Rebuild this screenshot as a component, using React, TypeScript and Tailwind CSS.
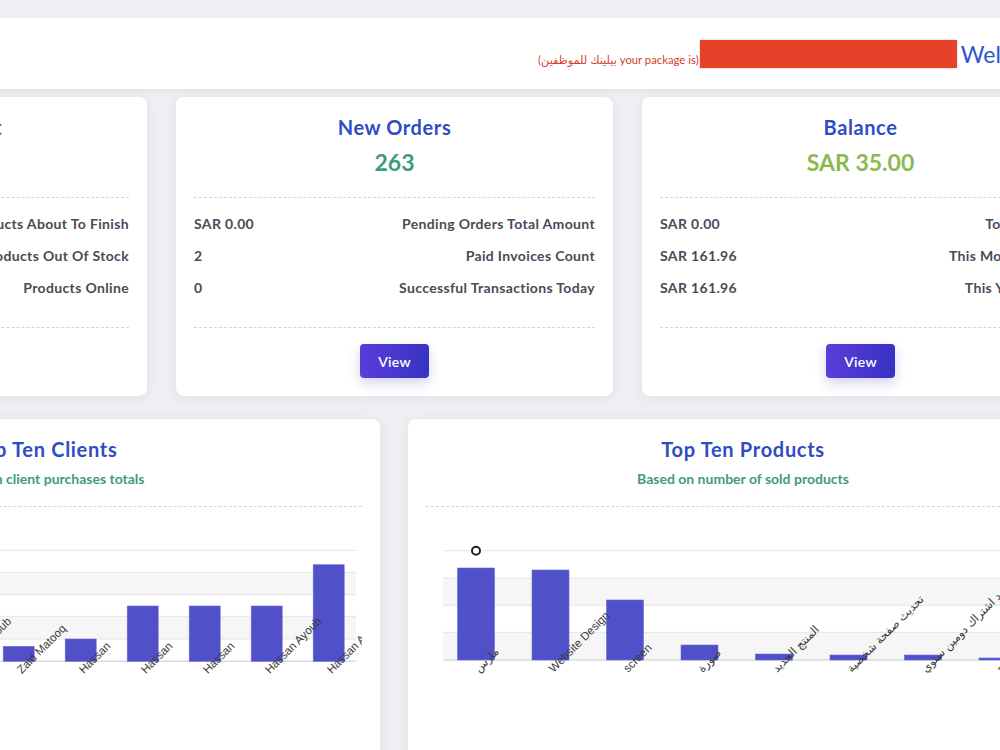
import React from "react";

type Row = { value: string; label: string };

type StatCardProps = {
  title: string;
  big: string;
  bigClass: string;
  rows: Row[];
};

function StatCard({ title, big, bigClass, rows }: StatCardProps) {
  return (
    <div className="bg-white rounded-[8px] shadow-[0_2px_12px_rgba(30,40,60,0.07)] px-[18px] pt-[17px] pb-[18px] flex flex-col">
      <h3 className="text-center text-[20px] leading-[26px] font-bold tracking-[0.6px] text-[#2f4dc2] whitespace-nowrap">
        {title}
      </h3>
      <div className={`text-center text-[23px] leading-[30px] font-bold mt-[7px] ${bigClass}`}>{big}</div>
      <div className="mt-[20px] border-t border-dashed border-[#d3d5da]" />
      <div className="pt-[9px] flex flex-col">
        {rows.map((r, i) => (
          <div
            key={i}
            className="h-[32px] flex items-center justify-between text-[14px] font-bold tracking-[0.35px] text-[#4b4a56] whitespace-nowrap"
          >
            <span>{r.value}</span>
            <span>{r.label}</span>
          </div>
        ))}
      </div>
      <div className="mt-[24px] border-t border-dashed border-[#d3d5da]" />
      <div className="flex justify-center mt-[16px]">
        <button className="w-[69px] h-[34px] rounded-[4px] bg-gradient-to-r from-[#5b3cd9] to-[#3632c2] text-white text-[14px] font-semibold tracking-[0.3px] shadow-[0_5px_12px_rgba(60,50,190,0.22)]">
          View
        </button>
      </div>
    </div>
  );
}

type ChartProps = {
  title: string;
  subtitle: string;
  gridLeft: number;
  lines: number[];
  bands: [number, number][];
  base: number;
  first: number;
  step: number;
  barW: number;
  tops: number[];
  labels: string[];
  marker?: boolean;
};

const LABEL_FONT = "Liberation Sans, DejaVu Sans, Arial, sans-serif";

function ChartCard(p: ChartProps) {
  const W = 634;
  return (
    <div className="bg-white rounded-[8px] shadow-[0_2px_12px_rgba(30,40,60,0.07)] px-[18px] pt-[17px] pb-[40px] flex flex-col">
      <h3 className="text-center text-[20px] leading-[26px] font-bold tracking-[0.7px] text-[#2f4dc2] whitespace-nowrap">
        {p.title}
      </h3>
      <p className="text-center text-[14px] leading-[20px] font-bold text-[#3f9a80] mt-[7px] whitespace-nowrap">
        {p.subtitle}
      </p>
      <div className="mt-[17px] border-t border-dashed border-[#d3d5da]" />
      <svg width={W} height={200} viewBox={`0 0 ${W} 200`} className="mt-[22px] block overflow-hidden">
        {p.bands.map(([a, b], i) => (
          <rect key={`b${i}`} x={p.gridLeft} y={a} width={W - 6 - p.gridLeft} height={b - a} fill="#f6f6f7" />
        ))}
        {p.lines.map((y, i) => (
          <line key={`l${i}`} x1={p.gridLeft} x2={W - 6} y1={y} y2={y} stroke="#e4e4e6" strokeWidth={1} />
        ))}
        <line x1={p.gridLeft} x2={W - 6} y1={p.base} y2={p.base} stroke="#dadadd" strokeWidth={1.5} />
        {p.tops.map((t, i) => {
          const cx = p.first + p.step * i;
          return (
            <rect
              key={`r${i}`}
              x={cx - p.barW / 2}
              y={t}
              width={p.barW}
              height={p.base - t}
              fill="#5050c9"
              stroke="#6a6ad6"
              strokeWidth={0.6}
            />
          );
        })}
        {p.labels.map((s, i) => {
          const cx = p.first + p.step * i + 3;
          const y = p.base + 13;
          return (
            <text
              key={`t${i}`}
              x={cx}
              y={y}
              transform={`rotate(-45 ${cx} ${y})`}
              fontSize={11.5}
              fontFamily={LABEL_FONT}
              fill="#3a3a3a"
              textAnchor="start"
            >
              {s}
            </text>
          );
        })}
        {p.marker && (
          <circle cx={p.first} cy={p.lines[0]} r={4} fill="white" stroke="#222" strokeWidth={2} />
        )}
      </svg>
    </div>
  );
}

export default function App() {
  return (
    <div className="w-[1000px] h-[750px] overflow-hidden bg-[#eeeff2] font-['Lato','DejaVu_Sans',sans-serif]">
      <div className="ml-[-290px] w-[1369px] pt-[18px]">
        {/* top bar */}
        <header className="h-[71px] bg-white shadow-[0_2px_6px_rgba(0,0,0,0.06)] flex items-center pl-[828px]">
          <span className="shrink-0 mt-[12px] text-[11.3px] leading-[12px] text-[#d23f2f] whitespace-nowrap">
            (بيلينك للموظفين your package is)
          </span>
          <span className="shrink-0 ml-[1px] w-[257px] h-[28px] bg-[#e8412a] shadow-[0_0_2px_rgba(0,0,0,0.25)]" />
          <span className="shrink-0 ml-[4px] text-[23px] leading-[28px] text-[#2f56cf] whitespace-nowrap">
            Welcome Hassan
          </span>
        </header>

        {/* summary cards */}
        <div className="mt-[8px] grid grid-cols-[437px_437px_437px] gap-[29px]">
          <StatCard
            title="Products Count"
            big="24"
            bigClass="text-[#3e9a80]"
            rows={[
              { value: "3", label: "Products About To Finish" },
              { value: "5", label: "Products Out Of Stock" },
              { value: "16", label: "Products Online" },
            ]}
          />
          <StatCard
            title="New Orders"
            big="263"
            bigClass="text-[#3e9a80]"
            rows={[
              { value: "SAR 0.00", label: "Pending Orders Total Amount" },
              { value: "2", label: "Paid Invoices Count" },
              { value: "0", label: "Successful Transactions Today" },
            ]}
          />
          <StatCard
            title="Balance"
            big="SAR 35.00"
            bigClass="text-[#8cb94f]"
            rows={[
              { value: "SAR 0.00", label: "Today Sales" },
              { value: "SAR 161.96", label: "This Month Sales" },
              { value: "SAR 161.96", label: "This Year Sales" },
            ]}
          />
        </div>

        {/* charts */}
        <div className="mt-[23px] grid grid-cols-[670px_670px] gap-[28px]">
          <ChartCard
            title="Top Ten Clients"
            subtitle="Based on client purchases totals"
            gridLeft={12}
            lines={[21.3, 43.3, 65.7, 87.3, 110]}
            bands={[
              [43.3, 65.7],
              [87.3, 110],
            ]}
            base={132.3}
            first={290.7 - 62 * 4}
            step={62}
            barW={31}
            tops={[110, 90, 117, 117, 117.3, 110, 77, 77, 77, 35.7]}
            labels={[
              "Ahmed Ali",
              "Mohammed",
              "Hassan",
              "Hassan Ayoub",
              "Zaid Matooq",
              "Hassan",
              "Hassan",
              "Hassan",
              "Hassan Ayoub",
              "Hassan Ayoub",
            ]}
          />
          <ChartCard
            title="Top Ten Products"
            subtitle="Based on number of sold products"
            gridLeft={17.5}
            lines={[21.7, 49, 76.3, 103.3]}
            bands={[
              [49, 76.3],
              [103.3, 131],
            ]}
            base={131}
            first={50}
            step={74.5}
            barW={37}
            tops={[39, 41, 71, 116, 125, 126, 126, 129]}
            labels={[
              "مارس",
              "Website Design",
              "screen",
              "صورة",
              "المنتج الجديد",
              "تحديث صفحة شخصية",
              "تجديد اشتراك دومين سنوي",
              "منتج",
            ]}
            marker
          />
        </div>
      </div>
    </div>
  );
}
